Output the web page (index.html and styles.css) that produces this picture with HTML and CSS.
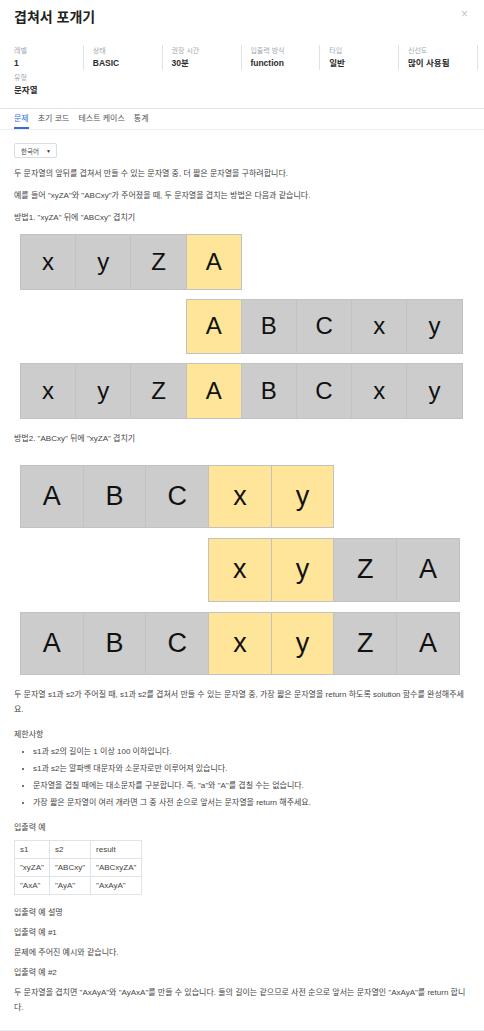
FILE: index.html
```html
<!DOCTYPE html>
<html lang="ko">
<head>
<meta charset="utf-8">
<title>겹쳐서 포개기</title>
<link rel="stylesheet" href="styles.css">
</head>
<body>
<div class="modal">
  <header class="header">
    <div class="title-row">
      <h1 class="title">겹쳐서 포개기</h1>
      <span class="close">×</span>
    </div>
    <div class="meta">
      <div class="meta-item"><div class="meta-label">레벨</div><div class="meta-value">1</div></div>
      <div class="meta-item"><div class="meta-label">상태</div><div class="meta-value">BASIC</div></div>
      <div class="meta-item"><div class="meta-label">권장 시간</div><div class="meta-value">30분</div></div>
      <div class="meta-item"><div class="meta-label">입출력 방식</div><div class="meta-value">function</div></div>
      <div class="meta-item"><div class="meta-label">타입</div><div class="meta-value">일반</div></div>
      <div class="meta-item"><div class="meta-label">신선도</div><div class="meta-value">많이 사용됨</div></div>
      <div class="meta-item"><div class="meta-label">유형</div><div class="meta-value">문자열</div></div>
    </div>
  </header>
  <nav class="tabs">
    <span class="tab active">문제</span>
    <span class="tab">초기 코드</span>
    <span class="tab">테스트 케이스</span>
    <span class="tab">통계</span>
  </nav>
  <main class="content">
    <div class="select">한국어 <span class="caret">▼</span></div>
    <p>두 문자열의 앞뒤를 겹쳐서 만들 수 있는 문자열 중, 더 짧은 문자열을 구하려합니다.</p>
    <p>예를 들어 "xyZA"와 "ABCxy"가 주어졌을 때, 두 문자열을 겹치는 방법은 다음과 같습니다.</p>
    <p>방법1. "xyZA" 뒤에 "ABCxy" 겹치기</p>
    <div class="diagram d1">
      <div class="drow">
        <span class="cell">x</span><span class="cell">y</span><span class="cell">Z</span><span class="cell hl">A</span>
      </div>
      <div class="drow shift">
        <span class="cell hl">A</span><span class="cell">B</span><span class="cell">C</span><span class="cell">x</span><span class="cell">y</span>
      </div>
      <div class="drow">
        <span class="cell">x</span><span class="cell">y</span><span class="cell">Z</span><span class="cell hl">A</span><span class="cell">B</span><span class="cell">C</span><span class="cell">x</span><span class="cell">y</span>
      </div>
    </div>
    <p>방법2. "ABCxy" 뒤에 "xyZA" 겹치기</p>
    <div class="diagram d2">
      <div class="drow">
        <span class="cell">A</span><span class="cell">B</span><span class="cell">C</span><span class="cell hl">x</span><span class="cell hl">y</span>
      </div>
      <div class="drow shift">
        <span class="cell hl">x</span><span class="cell hl">y</span><span class="cell">Z</span><span class="cell">A</span>
      </div>
      <div class="drow">
        <span class="cell">A</span><span class="cell">B</span><span class="cell">C</span><span class="cell hl">x</span><span class="cell hl">y</span><span class="cell">Z</span><span class="cell">A</span>
      </div>
    </div>
    <p>두 문자열 s1과 s2가 주어질 때, s1과 s2를 겹쳐서 만들 수 있는 문자열 중, 가장 짧은 문자열을 return 하도록 solution 함수를 완성해주세요.</p>
    <p class="section">제한사항</p>
    <ul class="rules">
      <li>s1과 s2의 길이는 1 이상 100 이하입니다.</li>
      <li>s1과 s2는 알파벳 대문자와 소문자로만 이루어져 있습니다.</li>
      <li>문자열을 겹칠 때에는 대소문자를 구분합니다. 즉, "a"와 "A"를 겹칠 수는 없습니다.</li>
      <li>가장 짧은 문자열이 여러 개라면 그 중 사전 순으로 앞서는 문자열을 return 해주세요.</li>
    </ul>
    <p class="section">입출력 예</p>
    <table class="examples">
      <tr><th>s1</th><th>s2</th><th>result</th></tr>
      <tr><td>"xyZA"</td><td>"ABCxy"</td><td>"ABCxyZA"</td></tr>
      <tr><td>"AxA"</td><td>"AyA"</td><td>"AxAyA"</td></tr>
    </table>
    <div class="explain">
      <p>입출력 예 설명</p>
      <p>입출력 예 #1</p>
      <p>문제에 주어진 예시와 같습니다.</p>
      <p>입출력 예 #2</p>
      <p>두 문자열을 겹치면 "AxAyA"와 "AyAxA"를 만들 수 있습니다. 둘의 길이는 같으므로 사전 순으로 앞서는 문자열인 "AxAyA"를 return 합니다.</p>
    </div>
  </main>
</div>
</body>
</html>
```

FILE: styles.css
```css
html, body {
  margin: 0;
  padding: 0;
  background: #fff;
}

body {
  font-family: "Liberation Sans", "Noto Sans CJK KR", sans-serif;
  color: #444;
  font-size: 8px;
}

.modal {
  width: 484px;
  min-height: 1031px;
  box-sizing: border-box;
  border-bottom: 1px solid #e9edf1;
}

.header {
  padding: 6px 14px 0;
  height: 109px;
  box-sizing: border-box;
  border-bottom: 1px solid #dfe5ec;
}

.title-row {
  display: flex;
  justify-content: space-between;
  align-items: center;
  height: 20px;
}

.title {
  margin: 0;
  font-size: 14px;
  font-weight: bold;
  color: #222;
}

.close {
  color: #c4c4c4;
  font-size: 12px;
  margin-right: 2px;
  margin-top: -4px;
}

.meta {
  display: grid;
  grid-template-columns: repeat(6, 70px);
  column-gap: 8.8px;
  row-gap: 2px;
  margin-top: 19px;
}

.meta-item {
  border-right: 1px solid #dde3ea;
  height: 25px;
}

.meta-item:last-child {
  border-right: none;
}

.meta-label {
  font-size: 7px;
  line-height: 12px;
  color: #a3a8ae;
}

.meta-value {
  font-size: 8.5px;
  line-height: 13px;
  font-weight: bold;
  color: #2c2c2c;
}

.tabs {
  display: flex;
  gap: 9px;
  padding: 0 14px;
  height: 20px;
  border-bottom: 1px solid #edf0f3;
}

.tab {
  font-size: 8px;
  line-height: 19px;
  color: #555;
  border-bottom: 2px solid transparent;
}

.tab.active {
  color: #2f6fd6;
  border-bottom-color: #2f6fd6;
}

.content {
  padding: 13px 14px 0;
}

.select {
  display: inline-flex;
  align-items: center;
  gap: 7px;
  height: 15px;
  box-sizing: border-box;
  padding: 0 5px 0 6px;
  border: 1px solid #d6dde5;
  border-radius: 2px;
  font-size: 6.5px;
  white-space: nowrap;
  color: #444;
}

.caret {
  font-size: 5px;
  color: #333;
}

p {
  margin: 7px 0 0;
  line-height: 15px;
}

.select + p {
  margin-top: 8px;
}

.diagram {
  display: flex;
  flex-direction: column;
  margin-left: 6px;
  font-family: "Liberation Sans", Arial, sans-serif;
  color: #111;
}

.d1 {
  gap: 9px;
  margin-top: 9px;
  margin-bottom: 12px;
}

.d2 {
  gap: 10px;
  margin-top: 19px;
  margin-bottom: 12px;
}

.drow {
  display: flex;
}

.cell {
  display: flex;
  flex: none;
  align-items: center;
  justify-content: center;
  box-sizing: border-box;
  background: #cccccc;
  border: 1px solid #c2c2c2;
  margin-left: -1px;
}

.drow .cell:first-child {
  margin-left: 0;
}

.cell.hl {
  background: #ffe599;
}

.d1 .cell {
  width: 56.2px;
  height: 55.5px;
  font-size: 24px;
}

.d1 .drow.shift {
  padding-left: 165.6px;
}

.d2 .cell {
  width: 63.7px;
  height: 63.5px;
  font-size: 27px;
}

.d2 .drow.shift {
  padding-left: 188px;
}

.diagram + p {
  margin-top: 0;
}

.section {
  margin-top: 10px;
}

.rules {
  margin: 2px 0 0;
  padding-left: 19px;
}

.rules li {
  line-height: 15px;
  margin-top: 2px;
}

.examples {
  border-collapse: collapse;
  margin-top: 5px;
  margin-bottom: 10px;
}

.examples th,
.examples td {
  border: 1px solid #dfe4ea;
  padding: 1px 5px;
  line-height: 15px;
  font-weight: normal;
  text-align: left;
  color: #444;
}

.explain p {
  margin-top: 5px;
}

.explain p:first-child {
  margin-top: 0;
}
```
